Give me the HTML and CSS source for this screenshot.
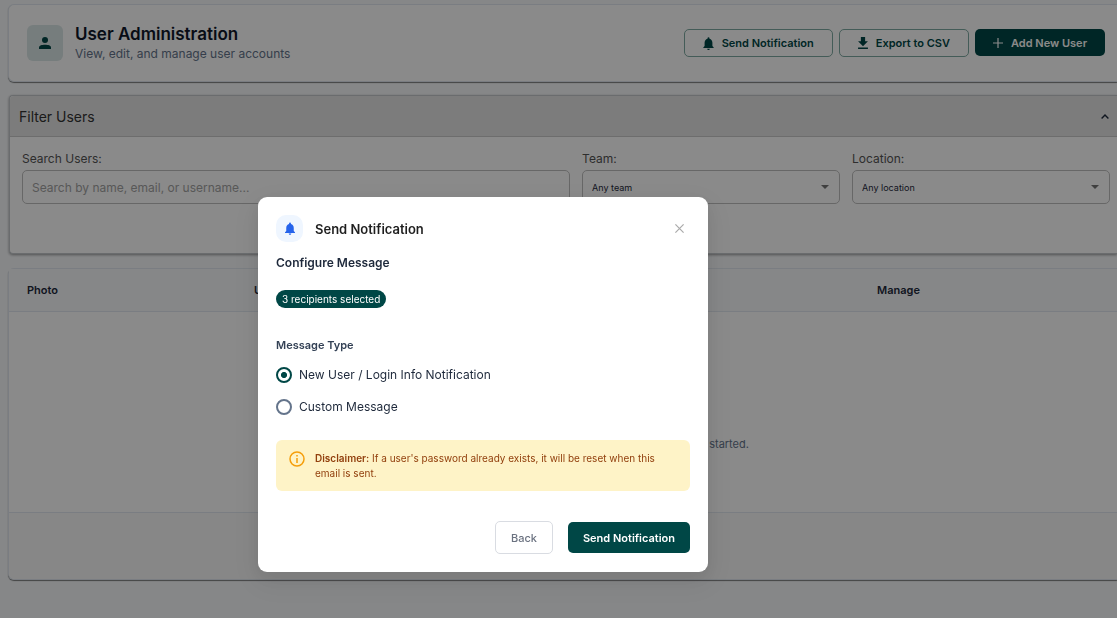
FILE: index.html
```
<!DOCTYPE html>
<html lang="en">
<head>
    <meta charset="UTF-8">
    <meta name="viewport" content="width=device-width, initial-scale=1.0">
    <title>User Administration</title>
    <link rel="stylesheet" href="styles.css">
</head>
<body>
    <main class="page">
        <header class="card page-header">
            <div class="header-icon">
                <svg width="12" height="12" viewBox="0 0 12 12" fill="currentColor"><circle cx="6" cy="3" r="3"/><path d="M0 12v-1.500C0 8.500 3 7.800 6 7.800s6 .7 6 2.700V12z"/></svg>
            </div>
            <div class="header-text">
                <h1>User Administration</h1>
                <p>View, edit, and manage user accounts</p>
            </div>
            <div class="header-actions">
                <button type="button" class="btn btn-outline">
                    <svg width="11" height="13" viewBox="0 0 16 20" fill="currentColor"><path d="M8 20c1.100 0 2-.9 2-2H6c0 1.100.9 2 2 2zm6-6V9c0-3.100-1.600-5.600-4.500-6.300V2a1.500 1.500 0 0 0-3 0v.7C3.600 3.400 2 5.900 2 9v5l-2 2v1h16v-1z"/></svg>
                    Send Notification
                </button>
                <button type="button" class="btn btn-outline">
                    <svg width="10" height="12" viewBox="0 0 14 17" fill="currentColor"><path d="M14 6h-4V0H4v6H0l7 7zM0 15v2h14v-2z"/></svg>
                    Export to CSV
                </button>
                <button type="button" class="btn btn-solid">
                    <svg width="10" height="10" viewBox="0 0 10 10" fill="none" stroke="currentColor" stroke-width="1.200"><path d="M5 0v10M0 5h10"/></svg>
                    Add New User
                </button>
            </div>
        </header>

        <section class="filters">
            <div class="filters-title">
                <h2>Filter Users</h2>
                <button type="button" class="collapse" aria-label="Collapse filters">
                    <svg width="8" height="5" viewBox="0 0 8 5" fill="none" stroke="currentColor" stroke-width="1.400"><path d="M.6 4.500L4 1l3.400 3.500"/></svg>
                </button>
            </div>
            <div class="filters-body">
                <div class="field">
                    <label for="search">Search Users:</label>
                    <input type="text" id="search" placeholder="Search by name, email, or username...">
                </div>
                <div class="field">
                    <label for="team">Team:</label>
                    <select id="team"><option>Any team</option></select>
                </div>
                <div class="field">
                    <label for="location">Location:</label>
                    <select id="location"><option>Any location</option></select>
                </div>
            </div>
        </section>

        <section class="card users">
            <table>
                <thead>
                    <tr>
                        <th class="col-photo">Photo</th>
                        <th class="col-user">User</th>
                        <th>Manage</th>
                    </tr>
                </thead>
                <tbody>
                    <tr>
                        <td colspan="3">Use the search box or choose a team or a location above to get started.</td>
                    </tr>
                </tbody>
            </table>
            <div class="table-footer"></div>
        </section>
    </main>

    <div class="overlay">
        <div class="modal" role="dialog" aria-modal="true" aria-labelledby="modal-title">
            <div class="modal-header">
                <span class="modal-icon">
                    <svg width="10" height="13" viewBox="0 0 16 20" fill="currentColor"><path d="M8 20c1.100 0 2-.9 2-2H6c0 1.100.9 2 2 2zm6-6V9c0-3.100-1.600-5.600-4.500-6.300V2a1.500 1.500 0 0 0-3 0v.7C3.600 3.400 2 5.900 2 9v5l-2 2v1h16v-1z"/></svg>
                </span>
                <h2 id="modal-title">Send Notification</h2>
                <button type="button" class="close" aria-label="Close">
                    <svg width="9" height="9" viewBox="0 0 9 9" fill="none" stroke="currentColor" stroke-width="1.200"><path d="M.4.4l8.200 8.200M8.600.4L.4 8.600"/></svg>
                </button>
            </div>
            <h3>Configure Message</h3>
            <span class="badge">3 recipients selected</span>
            <fieldset>
                <legend>Message Type</legend>
                <label class="radio"><input type="radio" name="type" checked> New User / Login Info Notification</label>
                <label class="radio"><input type="radio" name="type"> Custom Message</label>
            </fieldset>
            <div class="alert">
                <svg width="16" height="16" viewBox="0 0 16 16" fill="none" stroke="currentColor" stroke-width="1.500"><circle cx="8" cy="8" r="7"/><path d="M8 7v5M8 4v1.500"/></svg>
                <p><strong>Disclaimer:</strong> If a user's password already exists, it will be reset when this email is sent.</p>
            </div>
            <div class="modal-actions">
                <button type="button" class="btn btn-back">Back</button>
                <button type="button" class="btn btn-send">Send Notification</button>
            </div>
        </div>
    </div>
</body>
</html>
```
FILE: styles.css
```
* {
    box-sizing: border-box;
}
body {
    margin: 0;
    font-family: Inter, "Liberation Sans", sans-serif;
    font-size: 12px;
    line-height: 18px;
    color: #1e293b;
    background-color: #f8fafc;
}
h1, h2, h3, p {
    margin: 0;
}
button, input, select {
    font-family: inherit;
}
svg {
    flex: none;
}
.page {
    padding: 4px 0 12px 8px;
    overflow: hidden;
}
.card {
    background-color: white;
    border: 1px solid #e2e8f0;
    border-right: none;
    border-radius: 6px 0 0 6px;
    box-shadow: 0 1px 1px rgba(0, 0, 0, 0.5);
}

/* header */
.page-header {
    display: flex;
    align-items: center;
    height: 78px;
    padding: 0 12px 0 18px;
}
.header-icon {
    display: flex;
    align-items: center;
    justify-content: center;
    width: 36px;
    height: 36px;
    margin-right: 12px;
    border-radius: 6px;
    color: #004746;
    background-color: #dbe7e7;
}
.header-text {
    flex: 1;
}
.header-text h1 {
    font-size: 17px;
    line-height: 22px;
    font-weight: 600;
    color: #0f172a;
}
.header-text p {
    color: #64748b;
}
.header-actions {
    display: flex;
    gap: 6px;
}
.btn {
    display: flex;
    align-items: center;
    justify-content: center;
    gap: 8px;
    height: 28px;
    padding: 0 18px;
    border: 1px solid transparent;
    border-radius: 5px;
    font-size: 11px;
    font-weight: 600;
    cursor: pointer;
}
.btn-outline {
    color: #004746;
    background-color: white;
    border-color: #7faaa3;
}
.btn-solid {
    height: 27px;
    padding: 0 17px;
    color: white;
    background-color: #004746;
}

/* filters */
.filters {
    height: 159px;
    margin-top: 13px;
    margin-left: 1px;
    border: 1px solid #c4c8cc;
    border-right: none;
    border-radius: 4px 0 0 4px;
    background-color: white;
    box-shadow: 0 1px 3px rgba(0, 0, 0, 0.4);
}
.filters-title {
    display: flex;
    align-items: center;
    justify-content: space-between;
    height: 41px;
    padding: 1px 8px 0 9px;
    border-bottom: 1px solid #c9c9c9;
    border-radius: 4px 0 0 0;
    background-color: #e6e6e6;
}
.filters-title h2 {
    font-size: 14px;
    font-weight: 400;
    color: #333;
}
.collapse, .close {
    display: flex;
    padding: 0;
    border: none;
    background: none;
    color: #1e293b;
    cursor: pointer;
}
.filters-body {
    display: grid;
    grid-template-columns: 17fr 8fr 8fr;
    gap: 12px;
    padding: 13px 7px 0 12px;
}
.field label {
    display: block;
    margin-bottom: 2px;
    color: #555;
}
.field input, .field select {
    display: block;
    width: 100%;
    height: 34px;
    padding: 0 9px;
    border: 1px solid #bfbfbf;
    border-radius: 5px;
    background-color: white;
    font-size: 12px;
}
.field input::placeholder {
    color: #a3a3a3;
}
.field select {
    appearance: none;
    font-size: 9px;
    color: #1e293b;
}
.field {
    position: relative;
}
.field:has(select)::after {
    content: "";
    position: absolute;
    right: 11px;
    bottom: 15px;
    border: 4px solid transparent;
    border-top-color: #757575;
    border-bottom: none;
}

/* users table */
.users {
    margin-top: 14px;
}
.users table {
    width: 100%;
    table-layout: fixed;
    border-collapse: collapse;
}
.users th {
    height: 42px;
    padding: 0 18px;
    border-bottom: 1px solid #e2e8f0;
    background-color: #f8fafc;
    text-align: left;
    font-size: 11px;
    font-weight: 600;
}
.col-photo {
    width: 227px;
}
.col-user {
    width: 623px;
}
.users td {
    height: 201px;
    padding: 64px 0 0;
    border-bottom: 1px solid #e2e8f0;
    text-align: center;
    font-size: 11px;
    color: #64748b;
}
.table-footer {
    height: 66px;
    background-color: #fafafa;
    border-radius: 0 0 0 6px;
}

/* modal */
.overlay {
    position: fixed;
    inset: 0;
    display: flex;
    align-items: flex-start;
    justify-content: center;
    padding: 197px 151px 0 0;
    background-color: rgba(0, 0, 0, 0.46);
}
.modal {
    width: 450px;
    padding: 18px;
    border-radius: 9px;
    background-color: white;
    box-shadow: 0 6px 16px rgba(0, 0, 0, 0.08), 0 9px 28px 8px rgba(0, 0, 0, 0.05);
}
.modal-header {
    display: flex;
    align-items: center;
    padding-right: 6px;
}
.modal-icon {
    display: flex;
    align-items: center;
    justify-content: center;
    width: 27px;
    height: 27px;
    margin-right: 12px;
    border-radius: 10px;
    color: #2563eb;
    background-color: #eff6ff;
}
.modal-header h2 {
    flex: 1;
    font-size: 13px;
    font-weight: 600;
    color: #1f1f1f;
}
.close {
    color: #aaa;
}
.modal h3 {
    margin-top: 12px;
    font-size: 12px;
    font-weight: 600;
}
.badge {
    display: block;
    width: fit-content;
    margin-top: 18px;
    padding: 0 6px;
    border-radius: 9px;
    font-size: 10px;
    color: white;
    background-color: #004746;
}
fieldset {
    margin: 28px 0 0;
    padding: 0;
    border: none;
}
legend {
    padding: 0;
    font-size: 11px;
    font-weight: 600;
    color: #334155;
}
.radio {
    display: flex;
    align-items: center;
    gap: 7px;
    margin-top: 14px;
}
.radio:first-of-type {
    margin-top: 12px;
}
.radio input {
    appearance: none;
    width: 16px;
    height: 16px;
    margin: 0;
    border: 2px solid #64748b;
    border-radius: 50%;
}
.radio input:checked {
    border-color: #004746;
    background: radial-gradient(circle, #004746 50%, white 55%) center / 8px 8px no-repeat;
}
.alert {
    display: flex;
    gap: 10px;
    margin-top: 24px;
    padding: 11px 13px 10px;
    border-radius: 6px;
    background-color: #fef3c7;
    color: #f59e0b;
}
.alert p {
    font-size: 10px;
    line-height: 15px;
    color: #92400e;
}
.alert strong {
    font-weight: 600;
}
.modal-actions {
    display: flex;
    align-items: center;
    justify-content: flex-end;
    gap: 15px;
    margin-top: 30px;
}
.btn-back {
    height: 33px;
    padding: 0 15px;
    border-color: #d9dce2;
    font-weight: 500;
    color: #6b7280;
    background-color: white;
}
.btn-send {
    height: 31px;
    padding: 0 14px;
    color: white;
    background-color: #004746;
}
```
